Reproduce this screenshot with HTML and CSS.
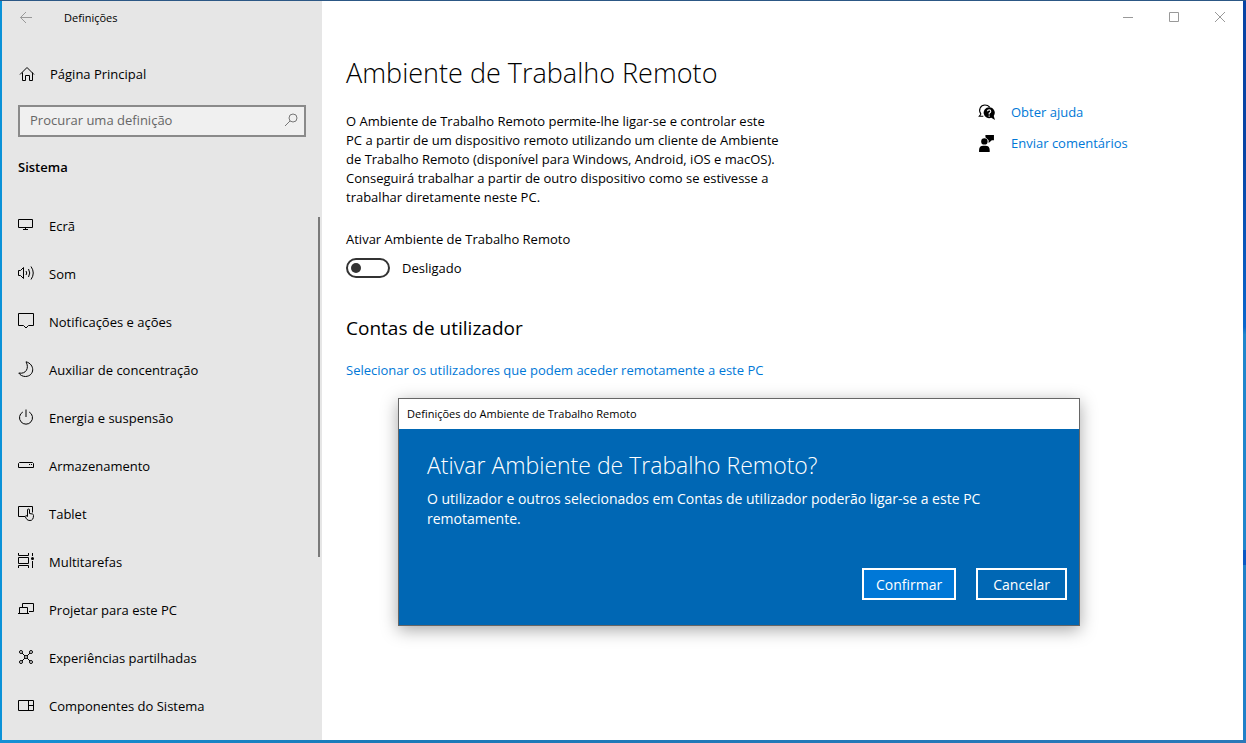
FILE: index.html
```
<!DOCTYPE html>
<html lang="pt">
<head>
  <meta charset="UTF-8">
  <meta name="viewport" content="width=device-width, initial-scale=1.0">
  <title>Definições</title>
  <link rel="stylesheet" href="styles.css">
</head>
<body class="desktop">

<div class="window">
  <aside class="sidebar">
    <div class="titlebar">
      <button class="back-btn" type="button" aria-label="Retroceder">
        <svg class="icon" viewBox="0 0 16 16"><path d="M14 7.500H2.500M8 2L2.500 7.500L8 13"/></svg>
      </button>
      <span class="app-title">Definições</span>
    </div>

    <a class="home-link" href="#">
      <svg class="icon" viewBox="0 0 16 16"><path d="M1 8.500L8 1.500L15 8.500M3.500 6.500V14.500H6.500V9.500H10.500V14.500H13.500V6.500"/></svg>
      Página Principal
    </a>

    <form class="search">
      <input class="search-input" type="search" placeholder="Procurar uma definição" aria-label="Procurar uma definição">
      <button class="search-btn" type="button" aria-label="Procurar">
        <svg viewBox="0 0 14 14"><circle cx="9" cy="5" r="4"/><path d="M6 8L1 13"/></svg>
      </button>
    </form>

    <h2 class="section-title">Sistema</h2>

    <nav class="nav">
      <a class="nav-item" href="#">
        <svg class="icon" viewBox="0 0 16 16"><path d="M.5 2.500H14.500V10.500H.5ZM7.500 10.500V12M5 12.500H10"/></svg>
        Ecrã
      </a>
      <a class="nav-item" href="#">
        <svg class="icon" viewBox="0 0 16 16"><path d="M.5 5.500H2.500L5.500 2.500V13.500L2.500 10.500H.5ZM8 6Q9.500 8 8 10M10.500 4Q13 8 10.500 12M13 1.500Q17.500 8 13 14.500"/></svg>
        Som
      </a>
      <a class="nav-item" href="#">
        <svg class="icon" viewBox="0 0 16 16"><path d="M.5 .5H15.500V12.500H10.500L8 15L5.500 12.500H.5Z"/></svg>
        Notificações e ações
      </a>
      <a class="nav-item" href="#">
        <svg class="icon" viewBox="0 0 16 16"><path d="M8 .8C17 3 17 15 7.500 15.500C4.500 15.500 2 14 .8 12C8 13.500 11.500 7 8 .8Z"/></svg>
        Auxiliar de concentração
      </a>
      <a class="nav-item" href="#">
        <svg class="icon" viewBox="0 0 16 16"><path d="M8 .5V8M4.800 3A6.500 6.500 0 1 0 11.200 3"/></svg>
        Energia e suspensão
      </a>
      <a class="nav-item" href="#">
        <svg class="icon" viewBox="0 0 16 16"><path d="M1.500 5.500H14.500L15.500 6.500V10.500H.5V6.500ZM11 7.500H12M13 7.500H14"/></svg>
        Armazenamento
      </a>
      <a class="nav-item" href="#">
        <svg class="icon" viewBox="0 0 16 16"><path d="M7 11.500H.5V1.500H14.500V7.500M9.500 11.500V5Q9.500 4 10.500 4Q11.500 4 11.500 5V8.500L14.500 9Q15.500 9.300 15.500 10.500C15.500 13.500 14.500 15.500 12 15.500C9 15.500 8.500 14 7.200 11.500Q7.500 9.500 9.500 11.500"/></svg>
        Tablet
      </a>
      <a class="nav-item" href="#">
        <svg class="icon" viewBox="0 0 16 16"><path d="M.5 0V2.500H10.500V0M.5 4.500H10.500V10.500H.5ZM.5 15V12.500H10.500V15M14.500 0V3M14.500 8V15"/><circle class="fill" cx="14.500" cy="5.500" r="1.500"/></svg>
        Multitarefas
      </a>
      <a class="nav-item" href="#">
        <svg class="icon" viewBox="0 0 16 16"><path d="M4.500 6V2.500H15.500V10.500H11M1.500 12V6.500H9.500V12M0 12.500H11"/></svg>
        Projetar para este PC
      </a>
      <a class="nav-item" href="#">
        <svg class="icon" viewBox="0 0 16 16"><circle cx="3" cy="3" r="1.500"/><circle cx="13" cy="3" r="1.500"/><circle cx="3" cy="13" r="1.500"/><circle cx="13" cy="13" r="1.500"/><circle cx="8" cy="8" r="1.500"/><path d="M4 4L7 7M12 4L9 7M4 12L7 9M12 12L9 9"/></svg>
        Experiências partilhadas
      </a>
      <a class="nav-item" href="#">
        <svg class="icon" viewBox="0 0 16 16"><path d="M.5 3.500H15.500V13.500H.5ZM10.500 3.500V13.500M10.500 8.500H15.500"/></svg>
        Componentes do Sistema
      </a>
      <div class="scroll-thumb"></div>
    </nav>
  </aside>

  <main class="main">
    <div class="window-controls">
      <button class="control-btn" type="button" aria-label="Minimizar">
        <svg viewBox="0 0 12 12"><path d="M1 6.500H11"/></svg>
      </button>
      <button class="control-btn" type="button" aria-label="Maximizar">
        <svg viewBox="0 0 12 12"><path d="M1.500 1.500H10.500V10.500H1.500Z"/></svg>
      </button>
      <button class="control-btn" type="button" aria-label="Fechar">
        <svg viewBox="0 0 12 12"><path d="M1 1L11 11M11 1L1 11"/></svg>
      </button>
    </div>

    <div class="page">
      <div class="content">
        <h1 class="page-title">Ambiente de Trabalho Remoto</h1>
        <p class="description">O Ambiente de Trabalho Remoto permite-lhe ligar-se e controlar este PC a partir de um dispositivo remoto utilizando um cliente de Ambiente de Trabalho Remoto (disponível para Windows, Android, iOS e macOS). Conseguirá trabalhar a partir de outro dispositivo como se estivesse a trabalhar diretamente neste PC.</p>

        <label class="toggle-label" for="remote-toggle">Ativar Ambiente de Trabalho Remoto</label>
        <div class="toggle-row">
          <input class="toggle" type="checkbox" role="switch" id="remote-toggle">
          <span>Desligado</span>
        </div>

        <h2 class="subtitle">Contas de utilizador</h2>
        <a class="link" href="#">Selecionar os utilizadores que podem aceder remotamente a este PC</a>
      </div>

      <div class="help">
        <a class="help-link" href="#">
          <svg class="help-icon" viewBox="0 0 16 16"><path class="outline" d="M2.800 9.500C-.2 5.500 2.500 1 6.500 1C8.500 1 10 1.800 11 3M2.800 9.500L1.200 11.500H5"/><path d="M10.500 3A5.200 5.200 0 1 0 12.500 13L16 15L14.800 11.200A5.200 5.200 0 0 0 10.500 3Z"/><path class="mark" d="M8.800 6.800Q9 5.500 10.500 5.500Q12 5.600 12 7Q12 7.800 10.500 8.700V9.800M10.500 10.800V12"/></svg>
          Obter ajuda
        </a>
        <a class="help-link" href="#">
          <svg class="help-icon" viewBox="0 0 16 16"><circle cx="6" cy="6" r="3"/><path d="M1 16V14Q1 10 5 10H7Q11 10 11 14V16ZM7 0H15V5H13L10 7.500V5L7 2Z"/></svg>
          Enviar comentários
        </a>
      </div>
    </div>
  </main>

  <div class="dialog" role="dialog" aria-labelledby="dialog-title">
    <div class="dialog-titlebar">Definições do Ambiente de Trabalho Remoto</div>
    <div class="dialog-body">
      <h2 class="dialog-title" id="dialog-title">Ativar Ambiente de Trabalho Remoto?</h2>
      <p class="dialog-text">O utilizador e outros selecionados em Contas de utilizador poderão ligar-se a este PC remotamente.</p>
      <div class="dialog-actions">
        <button class="btn btn-primary" type="button">Confirmar</button>
        <button class="btn" type="button">Cancelar</button>
      </div>
    </div>
  </div>
</div>

</body>
</html>
```
FILE: styles.css
```
* {
  box-sizing: border-box;
}

.desktop {
  margin: 0;
  padding: 1px 3px 3px 2px;
  min-height: 100vh;
  display: flex;
  font-family: "Open Sans", "Noto Sans", sans-serif;
  font-size: 13px;
  line-height: 20px;
  color: #000;
  background:
    linear-gradient(#2c5f8a, #2c5080) top / 100% 1px no-repeat,
    linear-gradient(90deg, #1590d5, #1a7ab8 30%, #2a78b8) bottom / 100% 3px no-repeat,
    linear-gradient(#0844a4 0 20%, #0a66cc 44%, #2086cc 45% 74%, #0a58c4 74% 76%, #2080c8 76%) right / 3px 100% no-repeat,
    #0a92d8;
}

.window {
  position: relative;
  flex: 1;
  display: flex;
  background: #fff;
}

a {
  color: inherit;
  text-decoration: none;
}

h1, h2, p {
  margin: 0;
}

button {
  padding: 0;
  border: 0;
  background: none;
  font-family: inherit;
}

svg {
  flex: none;
  fill: none;
  stroke: currentColor;
}

.icon {
  width: 16px;
  height: 16px;
}

.fill {
  fill: currentColor;
  stroke: none;
}

/* sidebar */
.sidebar {
  width: 320px;
  flex: none;
  background: #e6e6e6;
}

.titlebar {
  display: flex;
  align-items: center;
  gap: 30px;
  height: 34px;
  padding-left: 16px;
  font-size: 11px;
}

.back-btn {
  height: 16px;
  color: #999;
}

.back-btn svg {
  display: block;
}

.home-link {
  display: flex;
  align-items: center;
  gap: 15px;
  height: 48px;
  margin-top: 15px;
  padding-left: 17px;
}

.search {
  display: flex;
  align-items: center;
  height: 32px;
  margin: 7px 16px 0;
  padding: 0 6px 2px 10px;
  border: 2px solid #8a8a8a;
  background: #f0f0f0;
}

.search-input {
  flex: 1;
  min-width: 0;
  padding: 0;
  border: 0;
  outline: 0;
  background: none;
  font-family: inherit;
  font-size: 13px;
}

.search-input::placeholder {
  color: #666;
}

.search-btn {
  width: 14px;
  height: 14px;
  color: #777;
}

.search-btn svg {
  display: block;
}

.section-title {
  margin: 20px 16px 25px;
  font-size: 13px;
  font-weight: 600;
}

.nav {
  position: relative;
}

.nav-item {
  display: flex;
  align-items: center;
  gap: 15px;
  height: 48px;
  padding-left: 16px;
}

.nav-item .icon {
  margin-bottom: 2px;
}

.scroll-thumb {
  position: absolute;
  top: 15px;
  right: 2px;
  width: 2px;
  height: 340px;
  background: #7a7a7a;
}

/* main */
.main {
  flex: 1;
  min-width: 0;
}

.window-controls {
  display: flex;
  justify-content: flex-end;
  height: 32px;
}

.control-btn {
  display: flex;
  align-items: center;
  justify-content: center;
  width: 46px;
  color: #999;
}

.control-btn svg {
  width: 12px;
  height: 12px;
}

.page {
  display: flex;
  justify-content: space-between;
  padding: 22px 0 0 24px;
}

.content {
  width: 436px;
}

.page-title {
  font-size: 27px;
  font-weight: 300;
  line-height: 36px;
}

.description {
  margin: 21px 0 22px;
  line-height: 19px;
}

.toggle-label {
  display: block;
}

.toggle-row {
  display: flex;
  align-items: center;
  gap: 12px;
  margin-top: 9px;
}

.toggle {
  appearance: none;
  display: flex;
  align-items: center;
  width: 44px;
  height: 20px;
  margin: 0;
  padding: 0 3px;
  border: 2px solid #333;
  border-radius: 10px;
}

.toggle::before {
  content: "";
  width: 10px;
  height: 10px;
  border-radius: 50%;
  background: #333;
}

.toggle:checked {
  justify-content: flex-end;
}

.subtitle {
  margin: 36px 0 18px;
  font-size: 19px;
  font-weight: 400;
  line-height: 28px;
}

.link, .help-link {
  color: #0078d7;
}

.help {
  display: flex;
  flex-direction: column;
  gap: 11px;
  width: 265px;
  padding-top: 47px;
}

.help-link {
  display: flex;
  align-items: center;
  gap: 16px;
}

.help-icon {
  width: 17px;
  height: 17px;
  fill: #000;
  stroke: none;
}

.outline {
  fill: none;
  stroke: #000;
}

.mark {
  fill: none;
  stroke: #fff;
}

/* dialog */
.dialog {
  position: absolute;
  top: 397px;
  left: 396px;
  width: 682px;
  border: 1px solid #666;
  background: #0067b4;
  box-shadow: 0 4px 16px rgba(0, 0, 0, .35);
}

.dialog-titlebar {
  height: 30px;
  padding: 0 8px;
  background: #fff;
  font-size: 11px;
  line-height: 30px;
}

.dialog-body {
  padding: 20px 12px 25px 28px;
  color: #fff;
}

.dialog-title {
  font-size: 23px;
  font-weight: 300;
  line-height: 32px;
}

.dialog-text {
  max-width: 600px;
  margin-top: 8px;
  font-size: 14px;
}

.dialog-actions {
  display: flex;
  justify-content: flex-end;
  gap: 20px;
  margin-top: 39px;
}

.btn {
  height: 32px;
  padding: 0 15px;
  border: 2px solid #fff;
  color: #fff;
  font-size: 14px;
}

.btn-primary {
  padding: 0 12px;
  background: #0078d7;
}
```
